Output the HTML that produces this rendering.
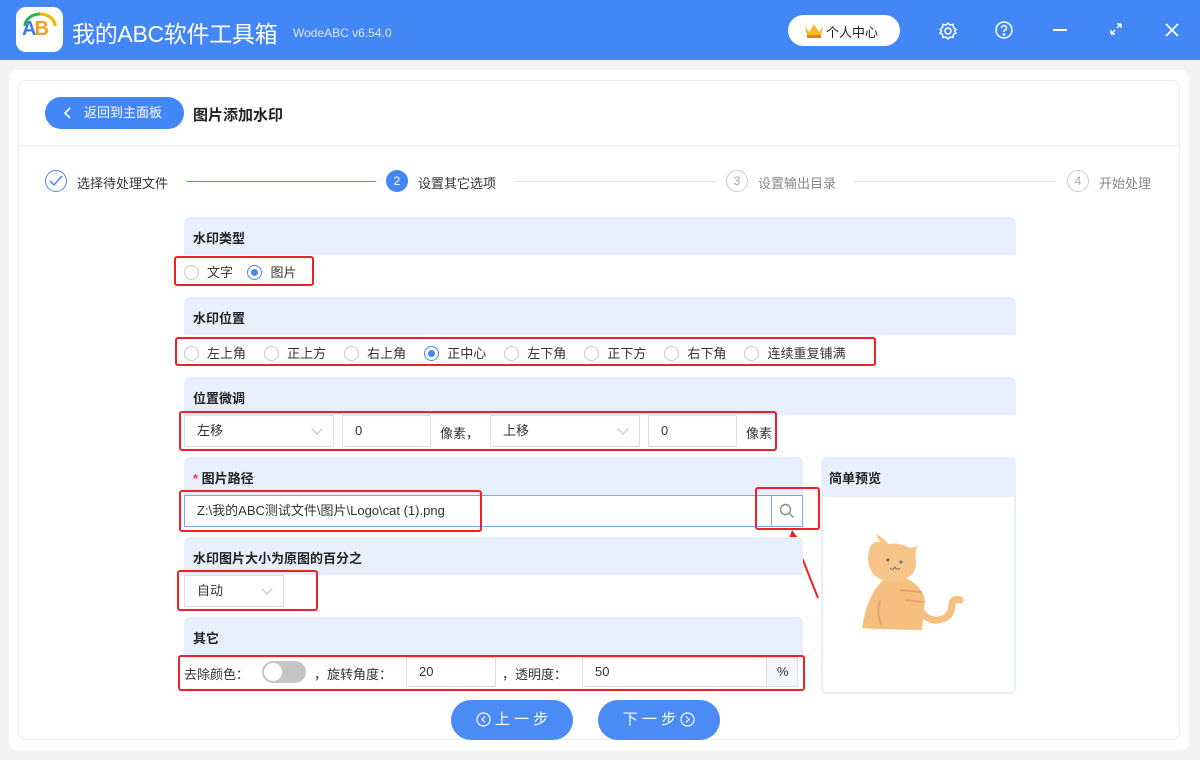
<!DOCTYPE html>
<html><head><meta charset="utf-8"><style>
*{margin:0;padding:0;box-sizing:border-box}
body{width:1200px;height:760px;overflow:hidden;background:#f3f3f3;font-family:"Liberation Sans","Noto Sans CJK SC",sans-serif;font-size:13px;color:#333;position:relative}
.a{position:absolute}
.hdr{left:0;top:0;width:1200px;height:60px;background:#4387f6}
.bar{background:#e8effc;border-radius:6px 6px 0 0;height:38px;font-weight:bold;font-size:13px;padding:11px 0 0 9px;color:#222}
.red{border:2.5px solid #ee2222;border-radius:3px}
.box{border:1px solid #dcdfe6;background:#fff;height:32px;line-height:30px;padding:0 12px;font-size:13px}
.rad{display:inline-block;width:15px;height:15px;border:1px solid #c8c8c8;border-radius:50%;vertical-align:-3px;margin-right:8px;background:#fff;position:relative}
.rad.on{border-color:#4387f6}
.rad.on:after{content:"";position:absolute;left:3px;top:3px;width:7px;height:7px;border-radius:50%;background:#4387f6}
.chev{position:absolute;right:12px;top:9px;width:8px;height:8px;border-right:1px solid #bbb;border-bottom:1px solid #bbb;transform:rotate(45deg)}
.btn{background:#4a8bf5;color:#fff;border-radius:20px;height:40px;width:122px;font-size:15px;text-align:center;line-height:40px}
.btn svg{vertical-align:-3px}
</style></head><body>
<div class="a hdr"></div>
<div class="a" style="left:16px;top:7px;width:47px;height:45px;background:#fff;border-radius:10px"></div>
<div class="a" style="left:22px;top:18px;font-size:20px;font-weight:bold;color:#3b7bf0;letter-spacing:-2px"><span style="color:#3b7bf0">A</span><span style="color:#f0a020">B</span></div>
<svg class="a" style="left:22px;top:12px" width="36" height="16"><path d="M3 14 A15 12 0 0 1 33 14" stroke="#2db04e" stroke-width="3" fill="none"/><path d="M18 2 A15 12 0 0 1 33 14" stroke="#f5b800" stroke-width="3" fill="none"/></svg>
<div class="a" style="left:72px;top:15px;color:#fff;font-size:23px;letter-spacing:-0.3px">我的ABC软件工具箱</div>
<div class="a" style="left:293px;top:26px;color:#dce8fd;font-size:12px">WodeABC v6.54.0</div>
<div class="a" style="left:788px;top:15px;width:112px;height:31px;background:#fff;border-radius:16px;font-size:13px;padding:7px 0 0 38px;color:#222">个人中心</div>
<svg class="a" style="left:804px;top:22px" width="20" height="17"><path d="M1 4 L5 10 L10 2 L15 10 L19 4 L17 14 H3 Z" fill="#f8b92d"/><rect x="3" y="13" width="14" height="3" fill="#f07a20"/></svg>
<svg class="a" style="left:938px;top:21px" width="20" height="20" fill="none" stroke="#fff" stroke-width="1.5"><circle cx="10" cy="10" r="3"/><path d="M10 2 L12 4 L15 3.5 L15.5 6.5 L18 8.5 L16.5 10 L18 12 L15.5 13.5 L15 16.5 L12 16 L10 18 L8 16 L5 16.5 L4.5 13.5 L2 12 L3.5 10 L2 8.5 L4.5 6.5 L5 3.5 L8 4 Z"/></svg>
<svg class="a" style="left:994px;top:20px" width="20" height="20" fill="none" stroke="#fff" stroke-width="1.5"><circle cx="10" cy="10" r="8"/><path d="M7.5 8 A2.5 2.5 0 1 1 10 10.5 V12"/><circle cx="10" cy="14.5" r="0.6" fill="#fff"/></svg>
<div class="a" style="left:1053px;top:29px;width:14px;height:2px;background:#fff"></div>
<svg class="a" style="left:1109px;top:22px" width="14" height="14" stroke="#fff" stroke-width="1.5" fill="none"><path d="M2 12 L6 8 M2 12 V8 M2 12 H6 M12 2 L8 6 M12 2 V6 M12 2 H8"/></svg>
<svg class="a" style="left:1164px;top:22px" width="16" height="16" stroke="#fff" stroke-width="1.7"><path d="M2 2 L14 14 M14 2 L2 14"/></svg>

<div class="a" style="left:9px;top:70px;width:1180px;height:680px;background:#fff;border-radius:8px"></div>
<div class="a" style="left:18px;top:80px;width:1162px;height:660px;border:1px solid #ececec;border-radius:8px"></div>
<div class="a" style="left:19px;top:145px;width:1160px;height:1px;background:#ececec"></div>
<div class="a" style="left:45px;top:97px;width:139px;height:32px;background:#4387f6;border-radius:16px;color:#fff;font-size:13px;line-height:32px;padding-left:39px">返回到主面板</div>
<svg class="a" style="left:63px;top:106px" width="10" height="14" fill="none" stroke="#fff" stroke-width="1.6"><path d="M7 2 L2 7 L7 12"/></svg>
<div class="a" style="left:193px;top:104px;font-size:15px;font-weight:bold;color:#222">图片添加水印</div>

<div class="a" style="left:45px;top:170px;width:22px;height:22px;border:1px solid #4387f6;border-radius:50%"></div>
<svg class="a" style="left:49px;top:175px" width="14" height="12" fill="none" stroke="#4387f6" stroke-width="1.4"><path d="M1 6 L5 10 L13 1"/></svg>
<div class="a" style="left:77px;top:173px;font-size:13px">选择待处理文件</div>
<div class="a" style="left:187px;top:181px;width:189px;height:1px;background:#4387f6"></div>
<div class="a" style="left:386px;top:170px;width:22px;height:22px;background:#4387f6;border-radius:50%;color:#fff;font-size:12px;text-align:center;line-height:22px">2</div>
<div class="a" style="left:418px;top:173px">设置其它选项</div>
<div class="a" style="left:514px;top:181px;width:202px;height:1px;background:#e4e4e4"></div>
<div class="a" style="left:726px;top:170px;width:22px;height:22px;border:1px solid #ccc;border-radius:50%;color:#aaa;font-size:12px;text-align:center;line-height:20px">3</div>
<div class="a" style="left:758px;top:173px;color:#888">设置输出目录</div>
<div class="a" style="left:854px;top:181px;width:202px;height:1px;background:#e4e4e4"></div>
<div class="a" style="left:1067px;top:170px;width:22px;height:22px;border:1px solid #ccc;border-radius:50%;color:#aaa;font-size:12px;text-align:center;line-height:20px">4</div>
<div class="a" style="left:1099px;top:173px;color:#888">开始处理</div>

<div class="a bar" style="left:184px;top:217px;width:832px">水印类型</div>
<div class="a" style="left:184px;top:262px"><span class="rad"></span>文字&nbsp;&nbsp;&nbsp;&nbsp;<span class="rad on"></span>图片</div>
<div class="a red" style="left:174px;top:256px;width:140px;height:30px"></div>

<div class="a bar" style="left:184px;top:297px;width:832px">水印位置</div>
<div class="a" style="left:184px;top:343px;word-spacing:0"><span class="rad"></span>左上角&nbsp;&nbsp;&nbsp;&nbsp;&nbsp;<span class="rad"></span>正上方&nbsp;&nbsp;&nbsp;&nbsp;&nbsp;<span class="rad"></span>右上角&nbsp;&nbsp;&nbsp;&nbsp;&nbsp;<span class="rad on"></span>正中心&nbsp;&nbsp;&nbsp;&nbsp;&nbsp;<span class="rad"></span>左下角&nbsp;&nbsp;&nbsp;&nbsp;&nbsp;<span class="rad"></span>正下方&nbsp;&nbsp;&nbsp;&nbsp;&nbsp;<span class="rad"></span>右下角&nbsp;&nbsp;&nbsp;&nbsp;&nbsp;<span class="rad"></span>连续重复铺满</div>
<div class="a red" style="left:175px;top:337px;width:701px;height:29px"></div>

<div class="a bar" style="left:184px;top:377px;width:832px">位置微调</div>
<div class="a box" style="left:184px;top:415px;width:150px">左移<i class="chev"></i></div>
<div class="a box" style="left:342px;top:415px;width:89px">0</div>
<div class="a" style="left:440px;top:423px">像素，</div>
<div class="a box" style="left:490px;top:415px;width:150px">上移<i class="chev"></i></div>
<div class="a box" style="left:648px;top:415px;width:89px">0</div>
<div class="a" style="left:746px;top:423px">像素</div>
<div class="a red" style="left:179px;top:411px;width:598px;height:40px"></div>

<div class="a bar" style="left:184px;top:457px;width:619px"><span style="color:#f33">*</span> 图片路径</div>
<div class="a box" style="left:184px;top:495px;width:619px;border-color:#7aa7f5">Z:\我的ABC测试文件\图片\Logo\cat (1).png</div>
<div class="a" style="left:771px;top:496px;width:31px;height:30px;border-left:1px solid #7aa7f5;background:#fff"></div>
<svg class="a" style="left:779px;top:503px" width="16" height="16" fill="none" stroke="#888" stroke-width="1.4"><circle cx="6.5" cy="6.5" r="5"/><path d="M10.5 10.5 L14.5 14.5"/></svg>
<div class="a red" style="left:179px;top:490px;width:303px;height:42px"></div>
<div class="a red" style="left:755px;top:487px;width:65px;height:43px"></div>
<svg class="a" style="left:785px;top:528px" width="40" height="72"><path d="M33 70 L10 12" stroke="#ee2222" stroke-width="2"/><path d="M7 2 L2 17 L15 13 Z" fill="#ee2222"/></svg>

<div class="a bar" style="left:184px;top:537px;width:619px">水印图片大小为原图的百分之</div>
<div class="a box" style="left:184px;top:575px;width:100px">自动<i class="chev"></i></div>
<div class="a red" style="left:177px;top:570px;width:141px;height:41px"></div>

<div class="a bar" style="left:184px;top:617px;width:619px">其它</div>
<div class="a" style="left:184px;top:664px">去除颜色：</div>
<div class="a" style="left:262px;top:661px;width:44px;height:22px;background:#c5c5c5;border-radius:11px"></div>
<div class="a" style="left:264px;top:663px;width:18px;height:18px;background:#fff;border-radius:50%"></div>
<div class="a" style="left:314px;top:664px">，旋转角度：</div>
<div class="a box" style="left:406px;top:657px;width:90px;height:30px;line-height:28px">20</div>
<div class="a" style="left:502px;top:664px">，透明度：</div>
<div class="a box" style="left:582px;top:657px;width:185px;height:30px;line-height:28px">50</div>
<div class="a box" style="left:766px;top:657px;width:32px;height:30px;line-height:28px;padding:0 0 0 10px;background:#f5f7fa">%</div>
<div class="a red" style="left:178px;top:655px;width:627px;height:36px"></div>

<div class="a" style="left:821px;top:457px;width:195px;height:237px;border:2px solid #e8effc;border-radius:6px"></div>
<div class="a bar" style="left:821px;top:457px;width:195px;height:40px;padding-left:8px">简单预览</div>
<svg class="a" style="left:860px;top:530px" width="110" height="110">
<path d="M60 80 Q70 95 85 88 Q92 84 92 75 Q92 68 100 70" stroke="#f6bf80" stroke-width="7" fill="none" stroke-linecap="round"/>
<path d="M2 98 Q10 50 35 45 Q60 50 65 70 L62 100 Q30 100 2 98 Z" fill="#f6bf80"/>
<path d="M8 30 Q8 10 20 12 L16 4 Q24 8 28 14 Q40 12 50 18 L58 16 Q54 22 56 30 Q58 48 35 52 Q10 52 8 30Z" fill="#f7c587"/>
<circle cx="28" cy="30" r="1.6" fill="#777"/><circle cx="41" cy="32" r="1.6" fill="#777"/>
<path d="M30 38 Q33 41 35 37 Q37 41 40 38" stroke="#777" fill="none"/>
<path d="M40 60 L62 62 M45 70 L63 72 M20 70 Q16 85 22 96" stroke="#e9a36b" stroke-width="2" fill="none"/>
</svg>

<div class="a btn" style="left:451px;top:700px"><svg width="15" height="15" fill="none" stroke="#fff" stroke-width="1.2"><circle cx="7.5" cy="7.5" r="6.5"/><path d="M9 4.5 L6 7.5 L9 10.5"/></svg> 上 一 步</div>
<div class="a btn" style="left:598px;top:700px">下 一 步 <svg width="15" height="15" fill="none" stroke="#fff" stroke-width="1.2"><circle cx="7.5" cy="7.5" r="6.5"/><path d="M6 4.5 L9 7.5 L6 10.5"/></svg></div>
</body></html>
